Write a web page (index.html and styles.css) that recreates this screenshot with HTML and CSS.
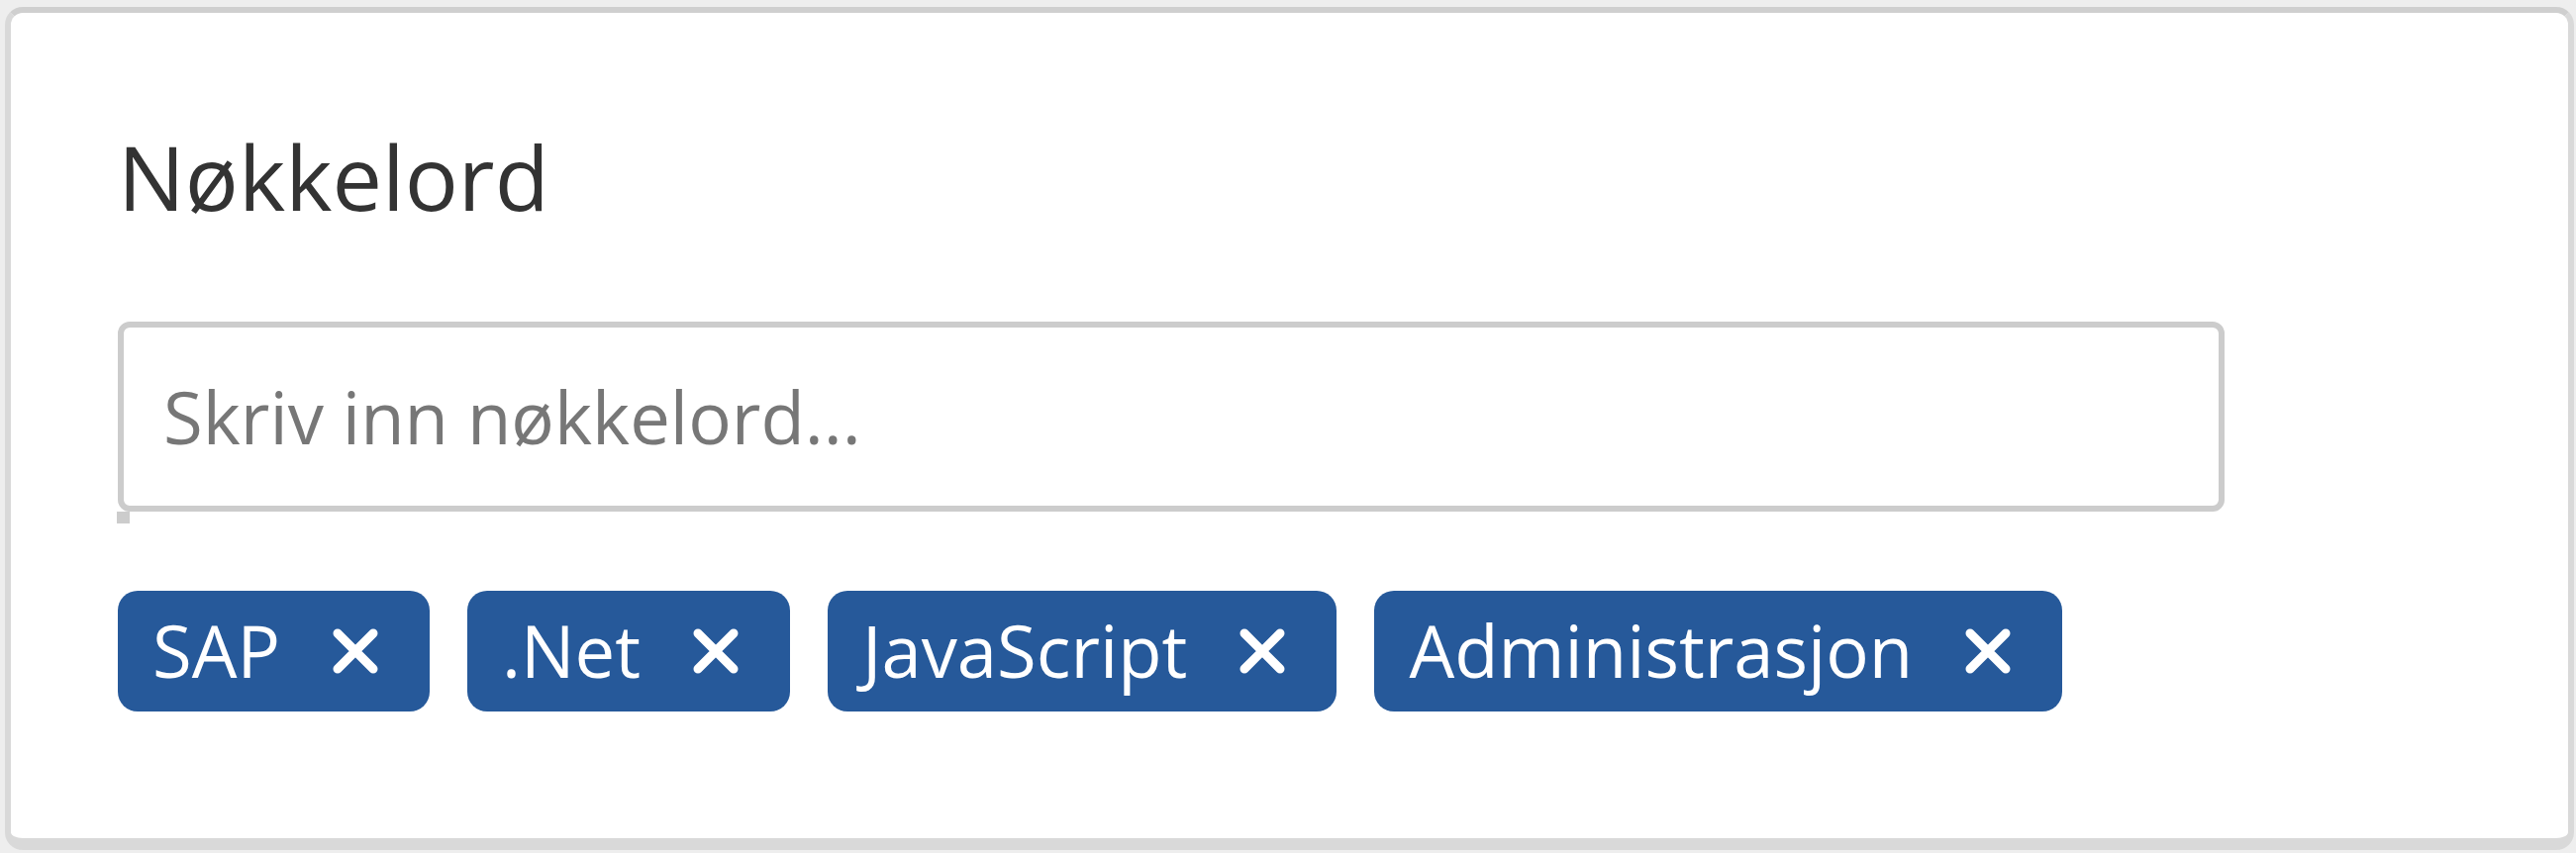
FILE: index.html
```
<!DOCTYPE html>
<html lang="no">
<head>
<meta charset="utf-8">
<title>Nøkkelord</title>
<link rel="stylesheet" href="styles.css">
</head>
<body>
<div class="card">
  <h2 class="title">Nøkkelord</h2>
  <div class="field">
    <div class="input"><span class="placeholder">Skriv inn nøkkelord...</span></div>
    <div class="handle"></div>
  </div>
  <div class="chips">
    <span class="chip"><span class="chip-label">SAP</span><svg class="x" viewBox="0 0 46 46"><path d="M5 5L41 41M41 5L5 41"/></svg></span>
    <span class="chip"><span class="chip-label">.Net</span><svg class="x" viewBox="0 0 46 46"><path d="M5 5L41 41M41 5L5 41"/></svg></span>
    <span class="chip"><span class="chip-label">JavaScript</span><svg class="x" viewBox="0 0 46 46"><path d="M5 5L41 41M41 5L5 41"/></svg></span>
    <span class="chip"><span class="chip-label">Administrasjon</span><svg class="x" viewBox="0 0 46 46"><path d="M5 5L41 41M41 5L5 41"/></svg></span>
  </div>
</div>
</body>
</html>
```
FILE: styles.css
```
html, body {
  margin: 0;
  background: #eeeeee;
}
body {
  padding: 7px 2px 3px 5px;
  font-family: "Open Sans", "Noto Sans", sans-serif;
}
.card {
  box-sizing: border-box;
  height: 852px;
  background: #ffffff;
  border: 6px solid #d9d9d9;
  border-top-color: #cfcfcf;
  border-bottom-width: 12px;
  border-radius: 18px;
  padding: 104px 40px 0 108px;
}
.title {
  margin: 0;
  font-size: 90px;
  font-weight: 400;
  line-height: 123px;
  color: #333333;
}
.field {
  margin-top: 85px;
  width: 2128px;
}
.input {
  box-sizing: border-box;
  height: 192px;
  border: 6px solid #cccccc;
  border-radius: 12px;
  display: flex;
  align-items: center;
  padding-left: 40px;
}
.placeholder {
  font-size: 72.5px;
  color: #777777;
  line-height: 101px;
}
.handle {
  width: 13px;
  height: 12px;
  margin-left: -1px;
  background: #cccccc;
}
.chips {
  margin-top: 68px;
  display: flex;
  gap: 38px;
}
.chip {
  display: flex;
  align-items: center;
  background: #26599a;
  color: #ffffff;
  border-radius: 20px;
  padding: 10px 52px 11px 35px;
  font-size: 72.4px;
  line-height: 101px;
}
.chip-label {
  display: block;
}
.x {
  width: 46px;
  height: 46px;
  margin-left: 53px;
  flex: none;
}
.x path {
  stroke: #ffffff;
  stroke-width: 9;
  stroke-linecap: round;
  fill: none;
}
```
